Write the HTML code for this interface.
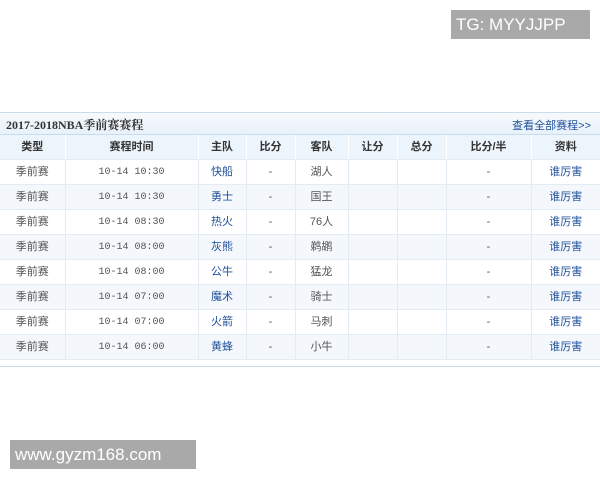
<!DOCTYPE html>
<html><head><meta charset="utf-8"><style>
*{margin:0;padding:0;box-sizing:border-box}
body{width:600px;height:480px;background:#fff;position:relative;overflow:hidden;font-family:"Liberation Sans","Noto Sans CJK SC",sans-serif}
.wm{position:absolute;background:#a9a9a9;color:#fff;font-size:17px;line-height:29px;padding-left:5px}
.frame{position:absolute;left:0;top:112px;width:600px;height:255px;border-top:1px solid #c9dcec;border-bottom:1px solid #c9dcec;background:#fff}
.title{height:22px;background:linear-gradient(#f6fafd,#e8f1f9);border-bottom:1px solid #c9dcec;position:relative}
.title b{position:absolute;left:6px;top:3px;font-family:"Liberation Serif","Noto Serif CJK SC",serif;font-size:12px;color:#333;font-weight:bold}
.title a{position:absolute;right:9px;top:4px;font-size:11px;color:#1f4f9a}
table{border-collapse:collapse;width:600px;table-layout:fixed;font-size:11px;font-family:"Liberation Sans","Noto Sans CJK SC",sans-serif}
td,th{height:24px;line-height:24px;padding:0;vertical-align:middle;text-align:center;border-right:1px solid #e3ecf4;border-bottom:1px solid #e3ecf4;color:#555;font-weight:normal;white-space:nowrap;overflow:hidden}
th{background:#edf5fc;color:#333;font-weight:bold;border-right:1px solid #fff}
td:last-child,th:last-child{border-right:none}
tr.e td{background:#f4f8fc}
.t span{display:block;height:24px;overflow:hidden;padding-top:2px;line-height:22px;font-family:"Liberation Mono",monospace;font-size:10px;color:#555}
.b{color:#1f4f9a}
</style></head><body>
<div class="wm" style="left:451px;top:10px;width:139px;height:29px">TG: MYYJJPP</div>
<div class="wm" style="left:10px;top:440px;width:186px;height:29px">www.gyzm168.com</div>
<div class="frame">
<div class="title"><b>2017-2018NBA季前赛赛程</b><a>查看全部赛程&gt;&gt;</a></div>
<table>
<colgroup><col style="width:65px"><col style="width:133px"><col style="width:48px"><col style="width:49px"><col style="width:53px"><col style="width:49px"><col style="width:49px"><col style="width:85px"><col style="width:69px"></colgroup>
<tr><th>类型</th><th>赛程时间</th><th>主队</th><th>比分</th><th>客队</th><th>让分</th><th>总分</th><th>比分/半</th><th>资料</th></tr>
<tr><td>季前赛</td><td class="t"><span>10-14 10:30</span></td><td class="b">快船</td><td>-</td><td>湖人</td><td></td><td></td><td>-</td><td class="b">谁厉害</td></tr>
<tr class="e"><td>季前赛</td><td class="t"><span>10-14 10:30</span></td><td class="b">勇士</td><td>-</td><td>国王</td><td></td><td></td><td>-</td><td class="b">谁厉害</td></tr>
<tr><td>季前赛</td><td class="t"><span>10-14 08:30</span></td><td class="b">热火</td><td>-</td><td>76人</td><td></td><td></td><td>-</td><td class="b">谁厉害</td></tr>
<tr class="e"><td>季前赛</td><td class="t"><span>10-14 08:00</span></td><td class="b">灰熊</td><td>-</td><td>鹈鹕</td><td></td><td></td><td>-</td><td class="b">谁厉害</td></tr>
<tr><td>季前赛</td><td class="t"><span>10-14 08:00</span></td><td class="b">公牛</td><td>-</td><td>猛龙</td><td></td><td></td><td>-</td><td class="b">谁厉害</td></tr>
<tr class="e"><td>季前赛</td><td class="t"><span>10-14 07:00</span></td><td class="b">魔术</td><td>-</td><td>骑士</td><td></td><td></td><td>-</td><td class="b">谁厉害</td></tr>
<tr><td>季前赛</td><td class="t"><span>10-14 07:00</span></td><td class="b">火箭</td><td>-</td><td>马刺</td><td></td><td></td><td>-</td><td class="b">谁厉害</td></tr>
<tr class="e"><td>季前赛</td><td class="t"><span>10-14 06:00</span></td><td class="b">黄蜂</td><td>-</td><td>小牛</td><td></td><td></td><td>-</td><td class="b">谁厉害</td></tr>
</table>
</div>
</body></html>
